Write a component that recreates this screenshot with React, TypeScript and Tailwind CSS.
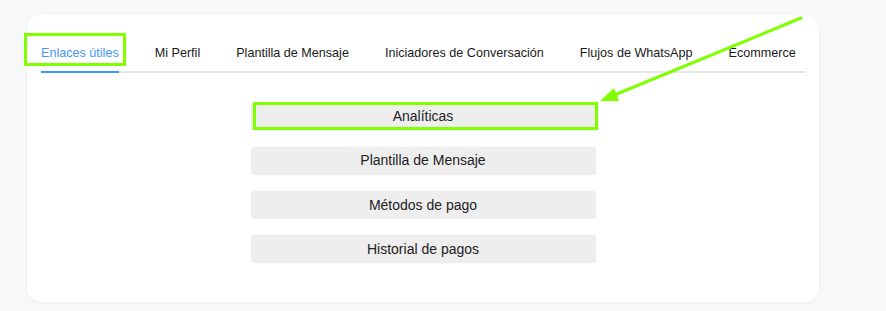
import React from "react";

const tabs = [
  "Enlaces útiles",
  "Mi Perfil",
  "Plantilla de Mensaje",
  "Iniciadores de Conversación",
  "Flujos de WhatsApp",
  "Ecommerce",
];

const buttons = ["Analíticas", "Plantilla de Mensaje", "Métodos de pago", "Historial de pagos"];

export default function App() {
  return (
    <div
      className="relative w-[886px] h-[311px] bg-[#f7f8fa] pt-[15px] pl-[27px] overflow-hidden"
      style={{ fontFamily: '"Liberation Sans", Arial, sans-serif' }}
    >
      <div className="w-[792px] h-[287px] bg-white rounded-[14px] shadow-[0_1px_3px_rgba(0,0,0,0.06)] pt-[27px] pl-[14px] pr-[13px]">
        <div className="flex gap-[36px] border-b-2 border-[#e5e7eb]">
          {tabs.map((t, i) => (
            <div
              key={t}
              className={
                "relative shrink-0 whitespace-nowrap pb-[7px] text-[12.6px] leading-[22px] " +
                (i === 0 ? "text-[#4a96f5]" : "text-[#1a1a1a]")
              }
            >
              {t}
              {i === 0 && (
                <div className="absolute left-0 right-0 bottom-[-2px] h-[2px] bg-[#4096ff]" />
              )}
            </div>
          ))}
        </div>
        <div className="flex flex-col items-center gap-[16.3px] pt-[29.5px] pr-[1px]">
          {buttons.map((b) => (
            <div
              key={b}
              className="w-[345px] h-[28px] bg-[#eeeeee] rounded-[4px] flex items-center justify-center text-[14px] text-[#222222] shadow-[0_0_1px_rgba(0,0,0,0.08)]"
            >
              {b}
            </div>
          ))}
        </div>
      </div>

      {/* annotation overlays */}
      <div className="absolute left-[24px] top-[33px] w-[102px] h-[33px] border-[3px] border-[#7fff00]" />
      <div className="absolute left-[253px] top-[102px] w-[345px] h-[28px] border-[3px] border-[#7fff00]" />
      <svg className="absolute left-0 top-0" width="886" height="311" viewBox="0 0 886 311">
        <line x1="801" y1="18" x2="612" y2="96" stroke="#7fff00" strokeWidth="3" strokeLinecap="round" />
        <polygon points="600,101 614,88 619,101" fill="#7fff00" />
      </svg>
    </div>
  );
}
